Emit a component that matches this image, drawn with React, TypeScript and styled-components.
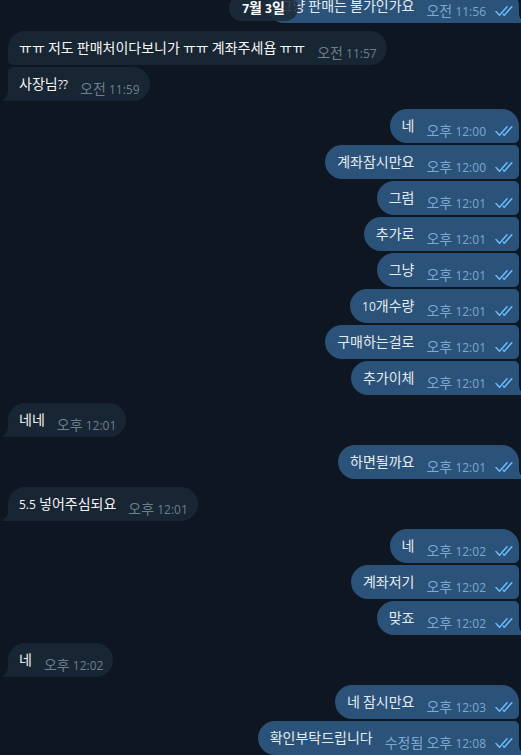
import React from "react";
import styled, { createGlobalStyle, css } from "styled-components";

const GlobalStyle = createGlobalStyle`
  *, *::before, *::after { box-sizing: border-box; }
  html { background: #0e1621; }
  body {
    margin: 0;
    overflow-x: hidden;
    background: #0e1621;
    color: #f5f5f5;
    font-family: "Noto Sans CJK KR", "Open Sans", sans-serif;
    font-size: 14px;
    line-height: 20px;
  }
`;

type Side = "in" | "out";

interface Message {
  text: string;
  meridiem: string;
  clock: string;
  edited?: boolean;
}

interface Group {
  side: Side;
  messages: Message[];
}

const am = (text: string, clock: string): Message => ({ text, clock, meridiem: "오전" });
const pm = (text: string, clock: string, edited = false): Message => ({
  text,
  clock,
  meridiem: "오후",
  edited,
});

const groups: Group[] = [
  { side: "out", messages: [am("그냥 판매는 불가인가요", "11:56")] },
  {
    side: "in",
    messages: [
      am("ㅠㅠ 저도 판매처이다보니가 ㅠㅠ 계좌주세욥 ㅠㅠ", "11:57"),
      am("사장님??", "11:59"),
    ],
  },
  {
    side: "out",
    messages: [
      pm("네", "12:00"),
      pm("계좌잠시만요", "12:00"),
      pm("그럼", "12:01"),
      pm("추가로", "12:01"),
      pm("그냥", "12:01"),
      pm("10개수량", "12:01"),
      pm("구매하는걸로", "12:01"),
      pm("추가이체", "12:01"),
    ],
  },
  { side: "in", messages: [pm("네네", "12:01")] },
  { side: "out", messages: [pm("하면될까요", "12:01")] },
  { side: "in", messages: [pm("5.5 넣어주심되요", "12:01")] },
  { side: "out", messages: [pm("네", "12:02"), pm("계좌저기", "12:02"), pm("맞죠", "12:02")] },
  { side: "in", messages: [pm("네", "12:02")] },
  { side: "out", messages: [pm("네 잠시만요", "12:03"), pm("확인부탁드립니다", "12:08", true)] },
];

const Chat = styled.main`
  position: relative;
  overflow: hidden;
  padding: 0 2px 0 8px;
`;

const DateBar = styled.header`
  position: absolute;
  z-index: 1;
  top: -5px;
  left: 8px;
  right: 2px;
  display: flex;
  justify-content: center;
`;

const DatePill = styled.time`
  padding: 2px 13px 4px;
  border-radius: 13px;
  background: rgba(30, 44, 58, 0.87);
  color: #ffffff;
  font-weight: 700;
`;

/* The list is scrolled slightly past the top of its first message. */
const History = styled.div`
  display: flex;
  flex-direction: column;
  gap: 8px;
  margin-top: -11px;
`;

const MessageGroup = styled.section<{ $side: Side }>`
  display: flex;
  flex-direction: column;
  align-items: ${(p) => (p.$side === "out" ? "flex-end" : "flex-start")};
  gap: 2px;
`;

const outgoing = css<{ $first: boolean; $last: boolean }>`
  padding: 0 6px 0 12px;
  background: #2b5278;
  color: #e4ecf2;
  border-radius: 17px ${(p) => (p.$first ? 17 : 5)}px ${(p) => (p.$last ? 0 : 5)}px 17px;
`;

const incoming = css<{ $first: boolean; $last: boolean }>`
  padding: 0 10px 0 11px;
  background: #182533;
  color: #f5f5f5;
  border-radius: ${(p) => (p.$first ? 17 : 5)}px 17px 17px ${(p) => (p.$last ? 0 : 5)}px;
`;

const Bubble = styled.article<{ $side: Side; $first: boolean; $last: boolean }>`
  position: relative;
  display: flex;
  align-items: flex-start;
  gap: 12px;
  min-height: 34px;
  ${(p) => (p.$side === "out" ? outgoing : incoming)}
`;

const TailShape = styled.svg<{ $side: Side }>`
  position: absolute;
  bottom: 0;
  ${(p) => (p.$side === "out" ? "left: 100%;" : "right: 100%; transform: scaleX(-1);")}
  fill: ${(p) => (p.$side === "out" ? "#2b5278" : "#182533")};
`;

const Body = styled.p`
  margin: 0;
  padding: 6px 0 8px;
`;

const Meta = styled.div<{ $side: Side }>`
  display: flex;
  align-items: center;
  gap: 9px;
  padding-top: 11px;
  white-space: nowrap;
  color: ${(p) => (p.$side === "out" ? "#7da8d3" : "#6d7f8f")};
`;

const Latin = styled.span`
  font-family: "Open Sans", sans-serif;
  font-size: 12px;
  line-height: 1;
`;

const TickIcon = styled.svg`
  display: block;
  fill: none;
  stroke: #6ab8f7;
  stroke-width: 1.6;
  stroke-linecap: round;
  stroke-linejoin: round;
`;

function Mixed({ children }: { children: string }) {
  return (
    <>
      {children
        .split(/([0-9?.:]+)/)
        .map((run, i) => (i % 2 ? <Latin key={i}>{run}</Latin> : run))}
    </>
  );
}

function Tail({ side }: { side: Side }) {
  return (
    <TailShape $side={side} width="6" height="10" viewBox="0 0 6 10" aria-hidden="true">
      <path d="M0 0C0 4 2 7.500 5.500 9.200Q6 10 5 10H0Z" />
    </TailShape>
  );
}

function Ticks() {
  return (
    <TickIcon width="18" height="14" viewBox="0 0 18 14" role="img" aria-label="읽음">
      <path d="M1 8.500L4.500 12.200L12 3.800M8.300 11.200L9.300 12.200L16.800 3.800" />
    </TickIcon>
  );
}

export default function App() {
  return (
    <>
      <GlobalStyle />
      <Chat>
        <DateBar>
          <DatePill dateTime="07-03">
            <Mixed>7월 3일</Mixed>
          </DatePill>
        </DateBar>
        <History>
          {groups.map(({ side, messages }, g) => (
            <MessageGroup key={g} $side={side}>
              {messages.map((message, i) => {
                const last = i === messages.length - 1;
                return (
                  <Bubble key={i} $side={side} $first={i === 0} $last={last}>
                    <Body>
                      <Mixed>{message.text}</Mixed>
                    </Body>
                    <Meta $side={side}>
                      <time>
                        <Mixed>
                          {`${message.edited ? "수정됨 " : ""}${message.meridiem} ${message.clock}`}
                        </Mixed>
                      </time>
                      {side === "out" && <Ticks />}
                    </Meta>
                    {last && <Tail side={side} />}
                  </Bubble>
                );
              })}
            </MessageGroup>
          ))}
        </History>
      </Chat>
    </>
  );
}
